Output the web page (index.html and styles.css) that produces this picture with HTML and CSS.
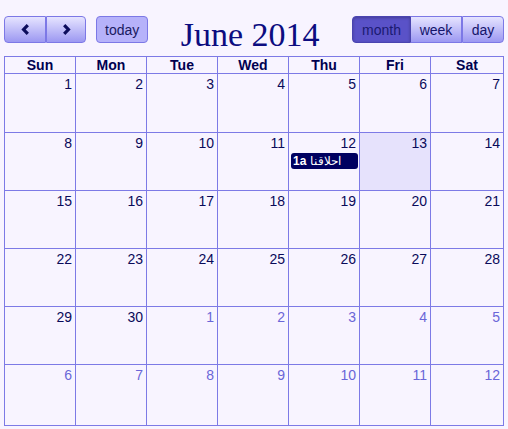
FILE: index.html
```html
<!DOCTYPE html>
<html lang="en">
<head>
    <meta charset="UTF-8">
    <meta name="viewport" content="width=device-width, initial-scale=1.0">
    <title>Calendar</title>
    <link rel="stylesheet" href="styles.css">
</head>
<body>
    <div class="calendar">
        <!-- Toolbar: navigation, title, views -->
        <div class="toolbar">
            <div class="btn-group">
                <button class="btn btn-icon" aria-label="prev">
                    <svg width="9" height="11" viewBox="0 0 9 11"><path d="M6.8 1.2 L2.6 5.5 L6.8 9.8" fill="none" stroke="#0c0c5c" stroke-width="3.2"/></svg>
                </button>
                <button class="btn btn-icon" aria-label="next">
                    <svg width="9" height="11" viewBox="0 0 9 11"><path d="M2.2 1.2 L6.4 5.5 L2.2 9.8" fill="none" stroke="#0c0c5c" stroke-width="3.2"/></svg>
                </button>
            </div>
            <button class="btn btn-today">today</button>
            <h2 class="title">June 2014</h2>
            <div class="btn-group">
                <button class="btn btn-month active">month</button>
                <button class="btn btn-week">week</button>
                <button class="btn btn-day">day</button>
            </div>
        </div>

        <!-- Month grid -->
        <div class="grid">
            <div class="head">Sun</div>
            <div class="head">Mon</div>
            <div class="head">Tue</div>
            <div class="head">Wed</div>
            <div class="head">Thu</div>
            <div class="head">Fri</div>
            <div class="head">Sat</div>

            <div class="day"><span class="num">1</span></div>
            <div class="day"><span class="num">2</span></div>
            <div class="day"><span class="num">3</span></div>
            <div class="day"><span class="num">4</span></div>
            <div class="day"><span class="num">5</span></div>
            <div class="day"><span class="num">6</span></div>
            <div class="day"><span class="num">7</span></div>

            <div class="day"><span class="num">8</span></div>
            <div class="day"><span class="num">9</span></div>
            <div class="day"><span class="num">10</span></div>
            <div class="day"><span class="num">11</span></div>
            <div class="day">
                <span class="num">12</span>
                <div class="event"><b>1a</b> <span dir="rtl">احلاقنا</span></div>
            </div>
            <div class="day today"><span class="num">13</span></div>
            <div class="day"><span class="num">14</span></div>

            <div class="day"><span class="num">15</span></div>
            <div class="day"><span class="num">16</span></div>
            <div class="day"><span class="num">17</span></div>
            <div class="day"><span class="num">18</span></div>
            <div class="day"><span class="num">19</span></div>
            <div class="day"><span class="num">20</span></div>
            <div class="day"><span class="num">21</span></div>

            <div class="day"><span class="num">22</span></div>
            <div class="day"><span class="num">23</span></div>
            <div class="day"><span class="num">24</span></div>
            <div class="day"><span class="num">25</span></div>
            <div class="day"><span class="num">26</span></div>
            <div class="day"><span class="num">27</span></div>
            <div class="day"><span class="num">28</span></div>

            <div class="day"><span class="num">29</span></div>
            <div class="day"><span class="num">30</span></div>
            <div class="day other"><span class="num">1</span></div>
            <div class="day other"><span class="num">2</span></div>
            <div class="day other"><span class="num">3</span></div>
            <div class="day other"><span class="num">4</span></div>
            <div class="day other"><span class="num">5</span></div>

            <div class="day other"><span class="num">6</span></div>
            <div class="day other"><span class="num">7</span></div>
            <div class="day other"><span class="num">8</span></div>
            <div class="day other"><span class="num">9</span></div>
            <div class="day other"><span class="num">10</span></div>
            <div class="day other"><span class="num">11</span></div>
            <div class="day other"><span class="num">12</span></div>
        </div>
    </div>
</body>
</html>
```

FILE: styles.css
```css
body {
    margin: 0;
    padding: 16px 4px 0 4px;
    background-color: #f8f4ff;
    font-family: "Liberation Sans", Arial, sans-serif;
    font-size: 14px;
    color: #0a0a5a;
}
.calendar {
    width: 500px;
}
.toolbar {
    display: flex;
    align-items: flex-start;
    height: 40px;
}
.btn-group {
    display: flex;
}
.btn {
    height: 27px;
    margin: 0;
    padding: 0 8px;
    font-family: "Liberation Sans", Arial, sans-serif;
    font-size: 14px;
    color: #14146a;
    border: 1px solid #7c78e6;
    background: linear-gradient(#e6e4ff, #9c98f2);
    cursor: pointer;
}
.btn-group .btn + .btn {
    border-left: none;
}
.btn-group .btn:first-child {
    border-radius: 4px 0 0 4px;
}
.btn-group .btn:last-child {
    border-radius: 0 4px 4px 0;
    border-left: 1px solid #7c78e6;
}
.btn-icon {
    width: 40px;
    display: flex;
    align-items: center;
    justify-content: center;
}
.btn-group .btn-icon:first-child {
    width: 42px;
}
.btn-today {
    margin-left: 10px;
    border-radius: 4px;
    background: #b6b2fa;
    color: #1a1a60;
    padding: 0 8px;
}
.btn-month {
    width: 59px;
}
.btn-week {
    width: 51px;
}
.btn-day {
    width: 42px;
}
.btn.active {
    background: #5a52c8;
    border-color: #4a44b0;
    color: #1a1a70;
    box-shadow: inset 0 1px 3px rgba(0, 0, 0, 0.25);
}
.title {
    flex: 1;
    margin: 0;
    text-align: center;
    font-family: "Liberation Serif", "Times New Roman", serif;
    font-weight: normal;
    font-size: 34px;
    color: #0c0c80;
    line-height: normal;
}
.grid {
    display: grid;
    grid-template-columns: repeat(6, 71px) 73px;
    grid-template-rows: 17px 59px 58px 58px 58px 58px 61px;
    border-top: 1px solid #7d7ae6;
    border-left: 1px solid #7d7ae6;
}
.head, .day {
    border-right: 1px solid #7d7ae6;
    border-bottom: 1px solid #7d7ae6;
}
.head {
    text-align: center;
    font-weight: bold;
    line-height: 16px;
    color: #000050;
}
.day {
    display: flex;
    flex-direction: column;
    align-items: flex-end;
}
.num {
    padding: 2px 3px 0 0;
    line-height: 16px;
}
.other .num {
    color: #6a66d8;
}
.today {
    background-color: #e6e2fc;
}
.event {
    align-self: stretch;
    margin: 2px 1px 0 2px;
    height: 16px;
    line-height: 16px;
    padding: 0 2px;
    border-radius: 3px;
    background-color: #000060;
    color: #ffffff;
    font-size: 12px;
    white-space: nowrap;
    overflow: hidden;
}
```
